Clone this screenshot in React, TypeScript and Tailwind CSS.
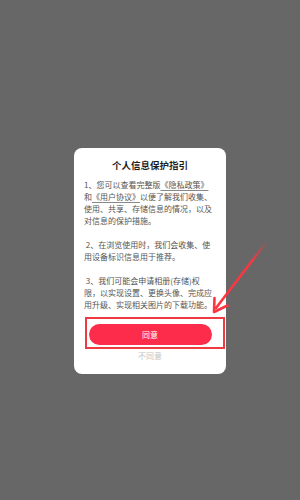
import React from "react";

const font = { fontFamily: '"Noto Sans CJK SC", "Noto Sans", sans-serif' };

function Line({ children }: { children: React.ReactNode }) {
  return <div className="h-[12px] leading-[12px] whitespace-pre">{children}</div>;
}

export default function App() {
  return (
    <div className="relative w-[300px] h-[500px] bg-[#676767] overflow-hidden" style={font}>
      <div className="flex justify-center pt-[148px]">
        <div className="w-[152px] bg-white rounded-[8px] px-[10px] pt-[10px] pb-[13px] flex flex-col">
          <div className="text-center text-[9.5px] leading-[14px] font-bold text-[#1e1e1e]">个人信息保护指引</div>
          <div className="mt-[7px] text-[8px] text-[#555]">
            <Line>
              1、您可以查看完整版<span className="underline decoration-[#888] underline-offset-[2px]">《隐私政策》</span>
            </Line>
            <Line>
              和<span className="underline decoration-[#888] underline-offset-[2px]">《用户协议》</span>以便了解我们收集、
            </Line>
            <Line>使用、共享、存储信息的情况，以及</Line>
            <Line>对信息的保护措施。</Line>
            <Line> </Line>
            <Line> 2、在浏览使用时，我们会收集、使</Line>
            <Line>用设备标识信息用于推荐。</Line>
            <Line> </Line>
            <Line> 3、我们可能会申请相册(存储)权</Line>
            <Line>限，以实现设置、更换头像、完成应</Line>
            <Line>用升级、实现相关图片的下载功能。</Line>
          </div>
          <div className="mt-[13px] mx-auto w-[123px] h-[21px] rounded-full bg-[#fe2c4b] flex items-center justify-center text-white text-[8px] leading-none">
            同意
          </div>
          <div className="mt-[6px] text-center text-[8px] leading-[10px] text-[#c4c4c4]">不同意</div>
        </div>
      </div>

      {/* annotation rectangle */}
      <div className="absolute left-[85px] top-[317px] w-[140px] h-[32px] border-2 border-[#f03a42]" />

      {/* annotation arrow */}
      <svg className="absolute left-0 top-0" width="300" height="500" viewBox="0 0 300 500">
        <defs>
          <linearGradient id="g" x1="264" y1="245" x2="214" y2="311" gradientUnits="userSpaceOnUse">
            <stop offset="0" stopColor="#ff3440" stopOpacity="0.2" />
            <stop offset="0.25" stopColor="#ff3440" stopOpacity="0.95" />
            <stop offset="1" stopColor="#ff3440" stopOpacity="1" />
          </linearGradient>
        </defs>
        <path d="M265 244 L216 308" stroke="url(#g)" strokeWidth="2.6" strokeLinecap="round" fill="none" />
        <path d="M214.5 298 L214 312 L227.5 305.5" stroke="#ff3440" strokeWidth="2.6" strokeLinecap="round" strokeLinejoin="round" fill="none" />
      </svg>
    </div>
  );
}
